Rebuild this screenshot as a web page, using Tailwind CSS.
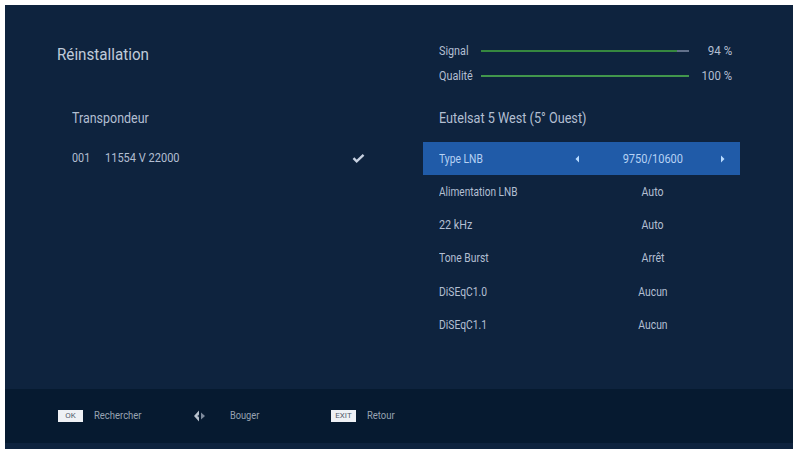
<!DOCTYPE html>
<html lang="fr">
<head>
<meta charset="utf-8">
<title>Réinstallation</title>
<script src="https://cdn.jsdelivr.net/npm/@tailwindcss/browser@4"></script>
</head>
<body class="bg-white w-[795px] h-[450px] overflow-hidden font-['Roboto','Liberation_Sans',sans-serif] text-[#b3bfd2]">
<div class="pt-[5px] pl-[5px]">
<main class="w-[788px] h-[444px] bg-[#0e233e] flex flex-col">
  <div class="h-[384px] flex">
    <section class="w-[418px] pl-[52px]">
      <h1 class="h-[72px] pt-[39px] text-[16px] leading-[22px] text-[#c0cbda]"><span class="inline-block origin-left scale-x-[.95]">Réinstallation</span></h1>
      <div class="pl-[15px]">
        <h2 class="mt-[31px] text-[14px] leading-[20px]"><span class="inline-block origin-left scale-x-[.89]">Transpondeur</span></h2>
        <div class="mt-[20px] h-[20px] flex items-center text-[12px]">
          <span class="w-[33px]"><span class="inline-block origin-left scale-x-[.9]">001</span></span>
          <span class="w-[247px]"><span class="inline-block origin-left scale-x-[.92]">11554 V 22000</span></span>
          <svg class="w-[13px] h-[11px]" viewBox="0 0 14 12" fill="none" stroke="#c7d1e1" stroke-width="2.6"><path d="M1.5 5.5 L5 9 L12.5 2"/></svg>
        </div>
      </div>
    </section>
    <section class="w-[317px]">
      <div class="pt-[33px] pl-[16px] pr-[8px] text-[12px]">
        <div class="h-[25px] flex items-center">
          <span class="w-[42px]"><span class="inline-block origin-left scale-x-[.9]">Signal</span></span>
          <div class="w-[208px] h-[2px] bg-[#62718b]"><div class="h-full bg-[#36883f]" style="width:94%"></div></div>
          <span class="flex-1 text-right"><span class="inline-block origin-right scale-x-[.97]">94 %</span></span>
        </div>
        <div class="h-[25px] flex items-center">
          <span class="w-[42px]"><span class="inline-block origin-left scale-x-[.9]">Qualité</span></span>
          <div class="w-[208px] h-[2px] bg-[#62718b]"><div class="h-full bg-[#42964c]" style="width:100%"></div></div>
          <span class="flex-1 text-right"><span class="inline-block origin-right scale-x-[.95]">100 %</span></span>
        </div>
      </div>
      <h2 class="mt-[20px] pl-[16px] text-[14px] leading-[20px]"><span class="inline-block origin-left scale-x-[.905] whitespace-nowrap">Eutelsat 5 West (5° Ouest)</span></h2>
      <div class="mt-[14px] text-[12px]">
        <div class="h-[33px] flex items-center pl-[16px] bg-[#205ba8] text-[#b6d2f4]">
          <span class="w-[136px]"><span class="inline-block origin-left scale-x-[.86]">Type LNB</span></span>
          <svg class="w-[5px] h-[8px]" viewBox="0 0 5 8"><path fill="#b9dcff" d="M4 0.5V7.5L0.5 4Z"/></svg>
          <span class="w-[140px] text-center pl-[6px]"><span class="inline-block scale-x-[.92]">9750/10600</span></span>
          <svg class="w-[5px] h-[8px]" viewBox="0 0 5 8"><path fill="#b9dcff" d="M1 0.5V7.5L4.5 4Z"/></svg>
        </div>
        <div class="h-[33.3px] flex items-center pl-[16px]"><span class="w-[147px]"><span class="inline-block origin-left scale-x-[.84]">Alimentation LNB</span></span><span class="w-[134px] text-center"><span class="inline-block scale-x-[.88]">Auto</span></span></div>
        <div class="h-[33.3px] flex items-center pl-[16px]"><span class="w-[147px]"><span class="inline-block origin-left scale-x-[.9]">22 kHz</span></span><span class="w-[134px] text-center"><span class="inline-block scale-x-[.88]">Auto</span></span></div>
        <div class="h-[33.3px] flex items-center pl-[16px]"><span class="w-[147px]"><span class="inline-block origin-left scale-x-[.86]">Tone Burst</span></span><span class="w-[134px] text-center"><span class="inline-block scale-x-[.88]">Arrêt</span></span></div>
        <div class="h-[33.3px] flex items-center pl-[16px]"><span class="w-[147px]"><span class="inline-block origin-left scale-x-[.86]">DiSEqC1.0</span></span><span class="w-[134px] text-center"><span class="inline-block scale-x-[.86]">Aucun</span></span></div>
        <div class="h-[33.3px] flex items-center pl-[16px]"><span class="w-[147px]"><span class="inline-block origin-left scale-x-[.86]">DiSEqC1.1</span></span><span class="w-[134px] text-center"><span class="inline-block scale-x-[.86]">Aucun</span></span></div>
      </div>
    </section>
  </div>
  <footer class="h-[54px] bg-[#061a30] flex items-center pl-[53px] text-[11px] text-[#98a3b2]">
    <span class="w-[25px] h-[12px] bg-[#eef1f5] text-[#555e6d] text-[8px] leading-[12px] text-center">OK</span>
    <span class="w-[110px] pl-[11px]"><span class="inline-block origin-left scale-x-[.86]">Rechercher</span></span>
    <svg class="w-[14px] h-[14px]" viewBox="0 0 14 14"><path fill="#b8c2ce" d="M1 7L6 1.5V12.5Z"/><path fill="#34465a" d="M4.2 7L6 5.4V8.6Z"/><path fill="#7d8a9b" d="M8 3.5L12 7L8 10.5Z"/></svg>
    <span class="w-[124px] pl-[23px]"><span class="inline-block origin-left scale-x-[.84]">Bouger</span></span>
    <span class="w-[25px] h-[12px] bg-[#eef1f5] text-[#555e6d] text-[8px] leading-[12px] text-center">EXIT</span>
    <span class="pl-[11px]"><span class="inline-block origin-left scale-x-[.86]">Retour</span></span>
  </footer>
</main>
</div>
</body>
</html>
